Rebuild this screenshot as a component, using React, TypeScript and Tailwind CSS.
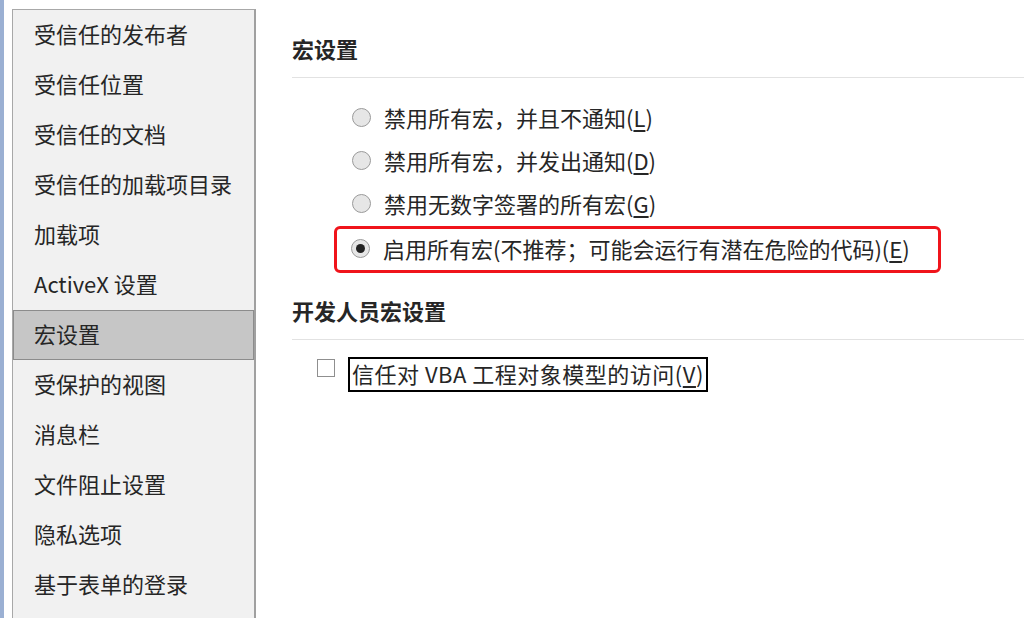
import { ReactNode } from 'react'

const NAV = [
  '受信任的发布者',
  '受信任位置',
  '受信任的文档',
  '受信任的加载项目录',
  '加载项',
  'ActiveX 设置',
  '宏设置',
  '受保护的视图',
  '消息栏',
  '文件阻止设置',
  '隐私选项',
  '基于表单的登录',
]

const font = { fontFamily: '"Noto Sans CJK SC", "Noto Sans", sans-serif' }

function Radio({ checked }: { checked?: boolean }) {
  return (
    <span className="w-[19px] h-[19px] rounded-full border-[1.5px] border-[#9a9a9a] bg-[#e6e6e6] flex items-center justify-center shrink-0">
      {checked && <span className="w-[9px] h-[9px] rounded-full bg-[#222]" />}
    </span>
  )
}

function Option({ label, hotkey, checked }: { label: string; hotkey: string; checked?: boolean }) {
  return (
    <div className="flex items-center gap-[13px] h-[43px]">
      <Radio checked={checked} />
      <span>
        {label}(<span className="underline underline-offset-[3px]">{hotkey}</span>)
      </span>
    </div>
  )
}

function Heading({ children, className = '' }: { children: ReactNode; className?: string }) {
  return (
    <div className={className}>
      <div className="leading-[30px] mb-[14px] font-bold text-[22px] text-[#262626]">{children}</div>
      <div className="h-px bg-[#e2e2e2]" />
    </div>
  )
}

export default function App() {
  return (
    <div className="w-[1024px] h-[618px] bg-white flex overflow-hidden text-[#262626]" style={font}>
      <div className="w-[4px] bg-[#9bb0d3] shrink-0" />
      <div className="w-[8px] shrink-0" />
      <nav className="w-[244px] mt-[9px] bg-[#f1f1f1] border-l border-t border-[#a8a8a8] border-r-[2px] border-r-[#a0a0a0] shrink-0">
        {NAV.map((item) => (
          <div
            key={item}
            className={
              item === '宏设置'
                ? 'h-[50px] flex items-center pb-[3px] pl-[20px] text-[22px] bg-[#c6c6c6] border border-[#8c8c8c]'
                : 'h-[50px] flex items-center pb-[3px] pl-[21px] text-[22px]'
            }
          >
            {item}
          </div>
        ))}
      </nav>

      <main className="flex-1 pl-[36px] pt-[33px] text-[22px]">
        <Heading>宏设置</Heading>
        <div className="pl-[60px] pt-[18px]">
          <Option label="禁用所有宏，并且不通知" hotkey="L" />
          <Option label="禁用所有宏，并发出通知" hotkey="D" />
          <Option label="禁用无数字签署的所有宏" hotkey="G" />
          <div className="-ml-[18px] mt-[1px] w-[607px] h-[47px] border-[3px] border-[#f0141b] rounded-[6px] pl-[14px] pb-[2px] flex items-center">
            <div className="flex items-center gap-[13px]">
              <Radio checked />
              <span>
                启用所有宏(不推荐；可能会运行有潜在危险的代码)(<span className="underline underline-offset-[3px]">E</span>)
              </span>
            </div>
          </div>
        </div>
        <Heading className="mt-[22px]">开发人员宏设置</Heading>
        <div className="pl-[25px] pt-[17px] flex items-start gap-[13px]">
          <span className="mt-[2px] w-[18px] h-[18px] border border-[#8f8f8f] bg-white shrink-0" />
          <span className="border-2 border-black h-[35px] px-[2px] pb-[2px] tracking-[0.5px] flex items-center">
            信任对 VBA 工程对象模型的访问(<span className="underline underline-offset-[3px]">V</span>)
          </span>
        </div>
      </main>
    </div>
  )
}
